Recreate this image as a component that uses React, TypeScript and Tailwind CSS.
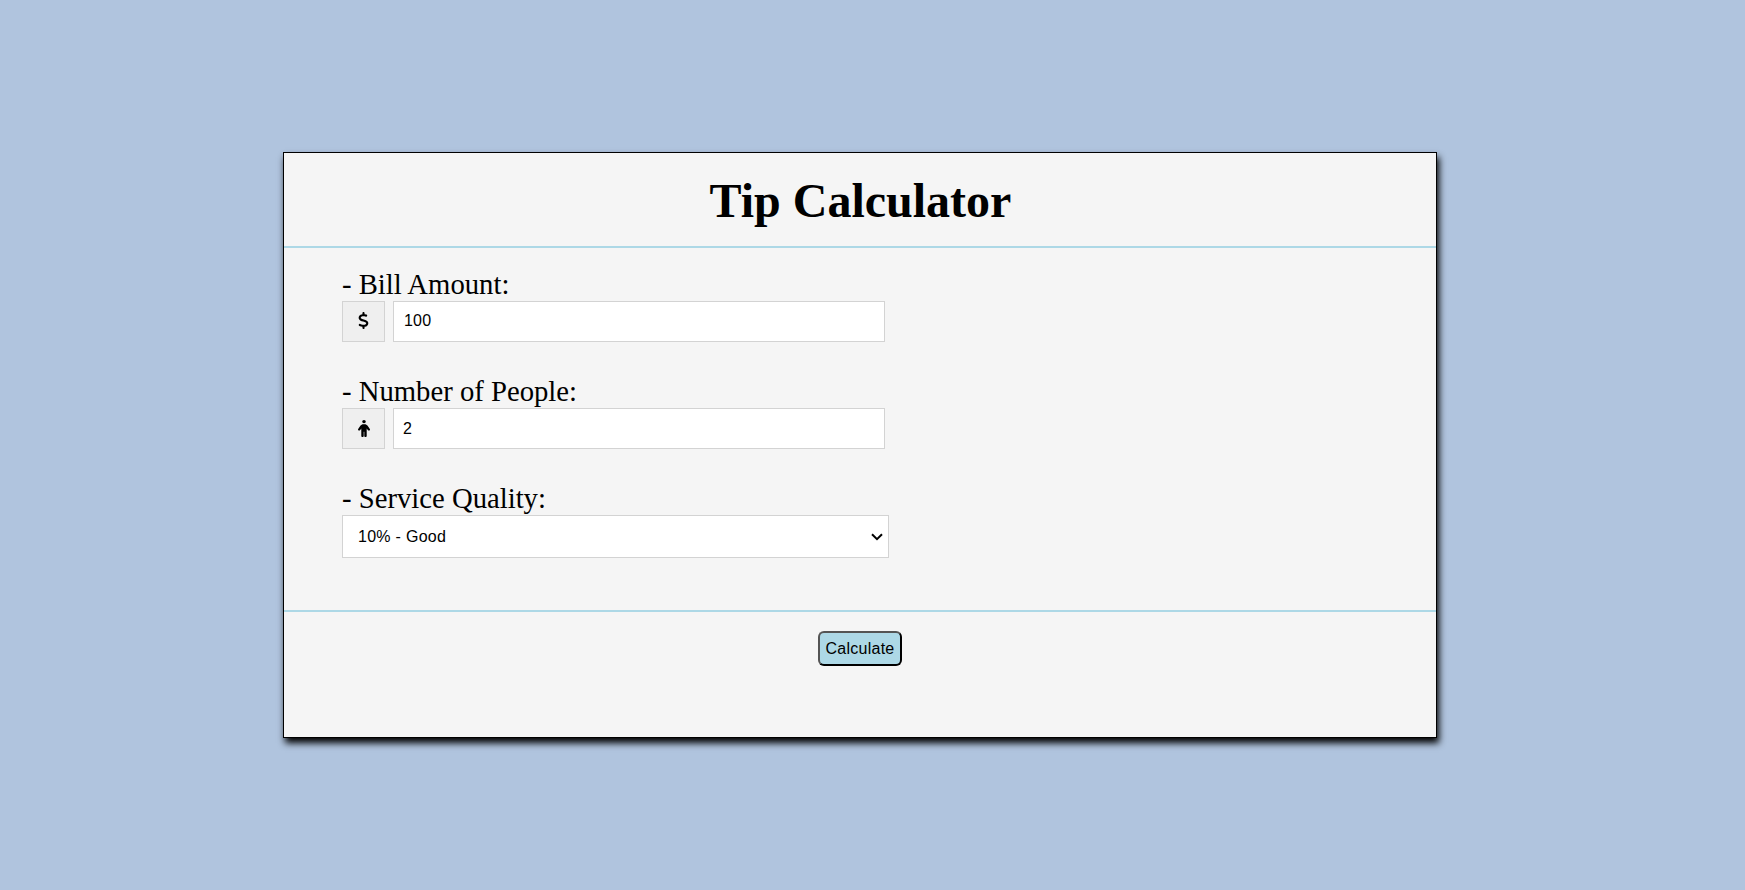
import { useState } from "react";
import type { ReactNode } from "react";
import { FaDollarSign, FaPerson } from "react-icons/fa6";
import clsx from "clsx";

const label = "block font-['Liberation_Serif',serif] text-[28.7px] leading-[32px] pb-px text-black";

function Field({ id, text, icon, initial }: { id: string; text: string; icon: ReactNode; initial: string }) {
  const [value, setValue] = useState(initial);
  return (
    <div className="mb-[33px]">
      <label htmlFor={id} className={label}>{text}</label>
      <div className="flex gap-2">
        <span className="flex h-[41px] w-[43px] items-center justify-center border border-[#d3d3d3] bg-[#efefef] pb-[2px]">
          {icon}
        </span>
        <input
          id={id}
          value={value}
          onChange={(e) => setValue(e.target.value)}
          className={clsx(
            "h-[41px] w-[492px] border border-[#d3d3d3] bg-white text-base text-black outline-none",
            id === "bill" ? "px-[10px] pb-[2px] tracking-[0.2px]" : "px-[9px]",
          )}
        />
      </div>
    </div>
  );
}

export default function App() {
  return (
    <main className="h-[890px] bg-[#b0c4de] pt-[152px] font-['Liberation_Sans',sans-serif] text-black">
      <section className="ml-[283px] h-[586px] w-[1154px] border border-black bg-[#f5f5f5] shadow-[2px_5px_7px_black]">
        <h1 className="h-[93px] pt-[20px] pl-px text-center font-['Liberation_Serif',serif] text-[48px] leading-[55px] font-bold">
          Tip Calculator
        </h1>
        <div className="h-[366px] border-y-2 border-[#add8e6] pt-5 pl-[58px]">
          <Field id="bill" text="- Bill Amount:" initial="100" icon={<FaDollarSign size={17} />} />
          <Field id="people" text="- Number of People:" initial="2" icon={<FaPerson className="mt-px h-[17px] w-[12px]" preserveAspectRatio="none" />} />
          <label htmlFor="quality" className={label}>- Service Quality:</label>
          <div className="relative h-[43px] w-[547px]">
            <select
              id="quality"
              defaultValue="10"
              className="block h-full w-full appearance-none border border-[#d3d3d3] bg-white px-[15px] text-base tracking-[0.28px] text-black"
            >
              <option value="10">10% - Good</option>
            </select>
            <svg
              viewBox="0 0 12 8"
              className="pointer-events-none absolute top-[18px] right-[6px] h-2 w-3 fill-none stroke-black stroke-2"
            >
              <path d="M1 1.2 6 6.2 11 1.2" />
            </svg>
          </div>
        </div>
        <div className="flex justify-center pt-[19px]">
          <button className="h-[35px] w-[84px] rounded-[6px] border-2 border-black bg-[#add8e6] text-base tracking-[0.25px] [border-style:outset]">
            Calculate
          </button>
        </div>
      </section>
    </main>
  );
}
